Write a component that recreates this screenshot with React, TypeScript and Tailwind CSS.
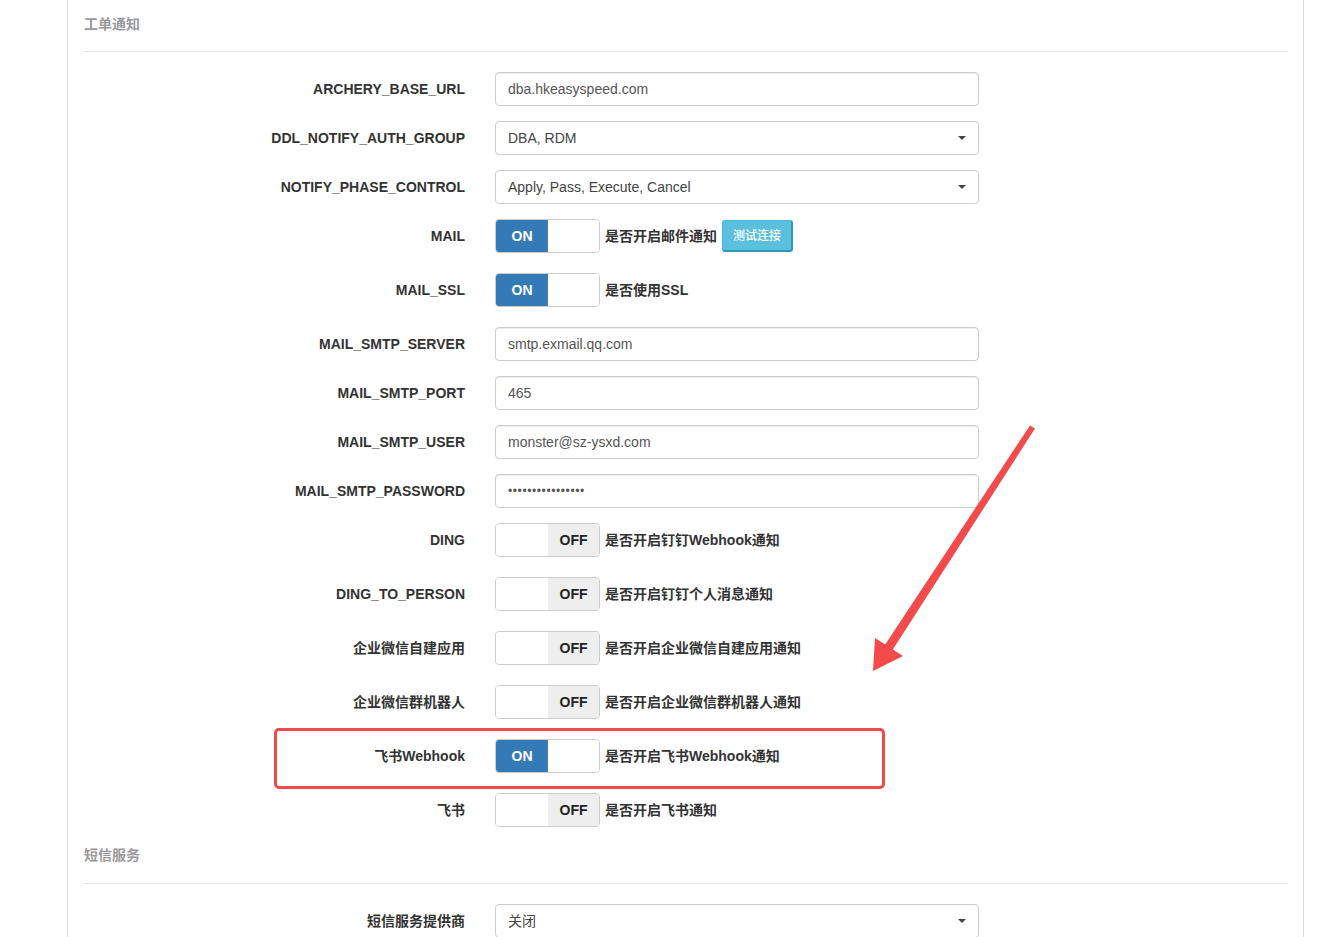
import React from "react";

const FONT = { fontFamily: '"Liberation Sans", Arial, "Noto Sans CJK SC", sans-serif' };

type Row =
  | { kind: "input"; label: string; value: string; password?: boolean }
  | { kind: "select"; label: string; value: string }
  | { kind: "toggle"; label: string; on: boolean; help: string; button?: string };

const rows: Row[] = [
  { kind: "input", label: "ARCHERY_BASE_URL", value: "dba.hkeasyspeed.com" },
  { kind: "select", label: "DDL_NOTIFY_AUTH_GROUP", value: "DBA, RDM" },
  { kind: "select", label: "NOTIFY_PHASE_CONTROL", value: "Apply, Pass, Execute, Cancel" },
  { kind: "toggle", label: "MAIL", on: true, help: "是否开启邮件通知", button: "测试连接" },
  { kind: "toggle", label: "MAIL_SSL", on: true, help: "是否使用SSL" },
  { kind: "input", label: "MAIL_SMTP_SERVER", value: "smtp.exmail.qq.com" },
  { kind: "input", label: "MAIL_SMTP_PORT", value: "465" },
  { kind: "input", label: "MAIL_SMTP_USER", value: "monster@sz-ysxd.com" },
  { kind: "input", label: "MAIL_SMTP_PASSWORD", value: "••••••••••••••••", password: true },
  { kind: "toggle", label: "DING", on: false, help: "是否开启钉钉Webhook通知" },
  { kind: "toggle", label: "DING_TO_PERSON", on: false, help: "是否开启钉钉个人消息通知" },
  { kind: "toggle", label: "企业微信自建应用", on: false, help: "是否开启企业微信自建应用通知" },
  { kind: "toggle", label: "企业微信群机器人", on: false, help: "是否开启企业微信群机器人通知" },
  { kind: "toggle", label: "飞书Webhook", on: true, help: "是否开启飞书Webhook通知" },
  { kind: "toggle", label: "飞书", on: false, help: "是否开启飞书通知" },
];

function Label({ text }: { text: string }) {
  return (
    <div className="w-[381px] shrink-0 text-right text-[14px] font-bold text-[#333] leading-[20px]">
      {text}
    </div>
  );
}

function TextBox({ value, password }: { value: string; password?: boolean }) {
  return (
    <div className="ml-[30px] flex h-[34px] w-[484px] items-center rounded-[4px] border border-[#ccc] bg-white pl-[12px] shadow-[inset_0_1px_1px_rgba(0,0,0,0.075)]">
      <span
        className={
          password
            ? "text-[12px] tracking-[0.6px] text-[#555]"
            : "text-[14px] text-[#555]"
        }
      >
        {value}
      </span>
    </div>
  );
}

function SelectBox({ value }: { value: string }) {
  return (
    <div className="ml-[30px] flex h-[34px] w-[484px] items-center justify-between rounded-[4px] border border-[#ccc] bg-white pl-[12px] pr-[12px]">
      <span className="text-[14px] text-[#444]">{value}</span>
      <span className="h-0 w-0 border-x-[4px] border-t-[4px] border-x-transparent border-t-[#444]" />
    </div>
  );
}

function Toggle({ on }: { on: boolean }) {
  return (
    <div className="ml-[30px] flex h-[34px] w-[105px] overflow-hidden rounded-[4px] border border-[#ccc] bg-white">
      {on ? (
        <>
          <div className="flex w-[52px] items-center justify-center bg-[#337ab7] text-[14px] font-bold text-white">
            ON
          </div>
          <div className="flex-1 bg-white" />
        </>
      ) : (
        <>
          <div className="w-[52px] bg-white" />
          <div className="flex flex-1 items-center justify-center bg-[#eeeeee] text-[14px] font-bold text-[#222]">
            OFF
          </div>
        </>
      )}
    </div>
  );
}

function FormRow({ row }: { row: Row }) {
  if (row.kind === "toggle") {
    return (
      <div className="mb-[20px] flex h-[34px] items-center">
        <Label text={row.label} />
        <Toggle on={row.on} />
        <span className="ml-[5px] text-[14px] font-bold text-[#333]">{row.help}</span>
        {row.button && (
          <span className="ml-[5px] flex h-[32px] w-[71px] items-center justify-center rounded-[3px] border border-[#46b8da] border-b-[2px] border-r-[2px] border-b-[#2f97b8] border-r-[#2f97b8] bg-[#5bc0de] text-[12px] font-medium text-white">
            {row.button}
          </span>
        )}
      </div>
    );
  }
  return (
    <div className="mb-[15px] flex h-[34px] items-center">
      <Label text={row.label} />
      {row.kind === "input" ? (
        <TextBox value={row.value} password={row.password} />
      ) : (
        <SelectBox value={row.value} />
      )}
    </div>
  );
}

function SectionHead({ title, first }: { title: string; first?: boolean }) {
  return (
    <div className={first ? "pt-[16px]" : ""}>
      <div className="text-[14px] font-bold leading-[16px] text-[#999]">{title}</div>
      <div className={first ? "mt-[19px] mb-[20px] h-px bg-[#e5e5e5]" : "mt-[20px] mb-[20px] h-px bg-[#e5e5e5]"} />
    </div>
  );
}

export default function App() {
  return (
    <div className="relative h-[937px] w-full overflow-hidden bg-white" style={FONT}>
      <div className="h-full pl-[67px] pr-[29px]">
        <div className="h-full border-x border-[#dddddd] pl-[16px] pr-[15px]">
          <SectionHead title="工单通知" first />
          {rows.map((r) => (
            <FormRow key={r.label} row={r} />
          ))}
          <SectionHead title="短信服务" />
          <div className="flex h-[34px] items-center">
            <Label text="短信服务提供商" />
            <SelectBox value="关闭" />
          </div>
        </div>
      </div>

      {/* annotation: red highlight box */}
      <div className="pointer-events-none absolute left-[274px] top-[728px] h-[61px] w-[611px] rounded-[5px] border-[3px] border-[#f24a4a]" />

      {/* annotation: red arrow */}
      <svg
        className="pointer-events-none absolute left-0 top-0"
        width="1333"
        height="937"
        viewBox="0 0 1333 937"
      >
        <polygon
          fill="#f34b4b"
          points="1035,428.6 892.8,649.5 903,656 873,671 875,638 885.2,644.5 1030,425.4"
        />
      </svg>
    </div>
  );
}
